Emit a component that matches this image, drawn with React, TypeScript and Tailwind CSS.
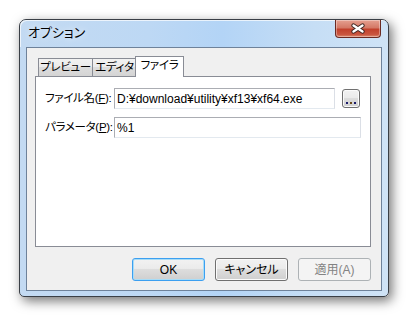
import React from "react";

const jp = "font-['Segoe_UI','Liberation_Sans','Noto_Sans_CJK_JP',sans-serif] [font-feature-settings:'palt']";

function Btn({ children, kind }: { children: React.ReactNode; kind: "default" | "normal" | "disabled" }) {
  const cls =
    kind === "default"
      ? "border-[#3c9ff0] shadow-[inset_0_0_0_1px_#a7dcf7] bg-[linear-gradient(#f2f2f2,#ebebeb_45%,#dddddd_50%,#cfcfcf)] text-black"
      : kind === "normal"
      ? "border-[#707070] shadow-[inset_0_0_0_1px_#fbfbfb] bg-[linear-gradient(#f2f2f2,#ebebeb_45%,#dddddd_50%,#cfcfcf)] text-black"
      : "border-[#adb2b5] bg-[#f4f4f4] text-[#838383]";
  return (
    <div className={`w-[73px] h-[23px] rounded-[3px] border flex items-center justify-center text-[12px] whitespace-nowrap ${cls}`}>
      {children}
    </div>
  );
}

const tabBg = "bg-[linear-gradient(#f2f2f2,#ebebeb_45%,#dddddd_50%,#d4d4d4)]";

export default function App() {
  return (
    <div className={`w-[410px] h-[320px] bg-white pl-[19px] pt-[19px] ${jp}`}>
      <div className="w-[370px] h-[278px] flex flex-col rounded-t-[7px] rounded-b-[5px] border border-[#3a3f46] shadow-[3px_4px_12px_rgba(0,0,0,0.55)] bg-[linear-gradient(90deg,#c3daf2_0%,#bdd8f4_35%,#b3d4f6_55%,#c6def5_80%,#cfe3f6_100%)]">
        {/* title bar */}
        <div className="h-[27px] flex items-start justify-between rounded-t-[6px] shadow-[inset_1px_1px_0_rgba(255,255,255,0.7)]">
          <div className="pl-[8px] pt-[5px] text-[13px] leading-[16px] text-black [text-shadow:0_0_6px_rgba(255,255,255,0.9)] whitespace-nowrap">
            オプション
          </div>
          <div className="mr-[7px] w-[46px] h-[18px] rounded-b-[4px] border border-t-0 border-[#6b2a22] bg-[linear-gradient(#e5a090,#d47966_45%,#c2412c_55%,#c9553f_85%,#dd8a6e)] flex items-center justify-center shadow-[inset_0_0_0_1px_rgba(255,255,255,0.35)]">
            <svg width="16" height="11" viewBox="0 0 16 11">
              <path d="M3.5 2.5 L12.5 8.5 M12.5 2.5 L3.5 8.5" stroke="#3d2420" strokeWidth="4.2" strokeLinecap="round" />
              <path d="M3.5 2.5 L12.5 8.5 M12.5 2.5 L3.5 8.5" stroke="#ffffff" strokeWidth="2.4" strokeLinecap="round" />
            </svg>
          </div>
        </div>
        {/* client area */}
        <div className="mx-[6px] h-[244px] border border-[#6e829a] bg-[#f0f0f0] flex flex-col pl-[8px] pr-[10px] pt-[8px]">
          {/* tabs */}
          <div className="h-[20px] flex items-end pl-[3px] text-[11.5px] leading-none tracking-[-0.3px]">
            <div className={`h-[18px] flex items-center justify-center border border-b-0 border-[#898c95] ${tabBg} text-black w-[55px] whitespace-nowrap`}>
              プレビュー
            </div>
            <div className={`h-[18px] flex items-center justify-center border border-l-0 border-b-0 border-[#898c95] ${tabBg} text-black w-[44px] whitespace-nowrap`}>
              エディタ
            </div>
            <div className="relative z-10 -ml-[2px] -mb-px h-[21px] w-[49px] flex items-center justify-center border border-b-0 border-[#898c95] bg-white text-black pb-[2px] whitespace-nowrap">
              ファイラ
            </div>
          </div>
          {/* panel */}
          <div className="h-[171px] border border-[#898c95] bg-white pt-[11px] pl-[9px] pr-[9px] flex flex-col gap-[8px] text-[12px]">
            <div className="flex items-center h-[21px]">
              <div className="w-[69px] text-black whitespace-nowrap text-[11.5px] tracking-[-0.3px]">
                ファイル名(<span className="underline">F</span>):
              </div>
              <div className="w-[221px] h-[21px] border border-[#abadb3] border-r-[#dbdfe6] border-b-[#e3e9ef] flex items-center pl-[2px] text-black whitespace-nowrap overflow-hidden">
                D:¥download¥utility¥xf13¥xf64.exe
              </div>
              <div className="ml-[7px] w-[18px] h-[19px] rounded-[3px] border border-[#707070] shadow-[inset_0_0_0_1px_#fbfbfb] bg-[linear-gradient(#f2f2f2,#ebebeb_45%,#dddddd_50%,#cfcfcf)] flex items-end justify-center pb-[3px]">
                <svg width="10" height="2" viewBox="0 0 10 2">
                  <rect x="0" y="0" width="2" height="2" fill="#1a1a6a" />
                  <rect x="4" y="0" width="2" height="2" fill="#6a4a1a" />
                  <rect x="8" y="0" width="2" height="2" fill="#1a1a6a" />
                </svg>
              </div>
            </div>
            <div className="flex items-center h-[21px]">
              <div className="w-[69px] text-black whitespace-nowrap text-[11.5px] tracking-[-0.3px]">
                パラメータ(<span className="underline">P</span>):
              </div>
              <div className="w-[247px] h-[21px] border border-[#abadb3] border-r-[#dbdfe6] border-b-[#e3e9ef] flex items-center pl-[2px] text-black">
                %1
              </div>
            </div>
          </div>
          {/* buttons */}
          <div className="mt-[11px] flex justify-end gap-[10px]">
            <Btn kind="default">OK</Btn>
            <Btn kind="normal">キャンセル</Btn>
            <Btn kind="disabled">適用(A)</Btn>
          </div>
        </div>
      </div>
    </div>
  );
}
